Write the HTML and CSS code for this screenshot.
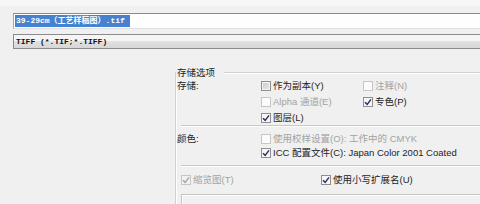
FILE: index.html
```html
<!DOCTYPE html>
<html lang="zh-CN">
<head>
<meta charset="utf-8">
<title>存储为</title>
<link rel="stylesheet" href="styles.css">
</head>
<body>
<div class="dialog">
  <div class="filename"><span class="sel">39-29cm（工艺样稿图）.tif</span></div>
  <div class="format">TIFF (*.TIF;*.TIFF)</div>

  <section class="group">
    <div class="group-title">存储选项</div>

    <div class="opts store">
      <span class="label">存储:</span>
      <label class="item"><span class="cb cb-hover"></span>作为副本(Y)</label>
      <label class="item disabled"><span class="cb"></span>注释(N)</label>
      <label class="item disabled c2"><span class="cb"></span>Alpha 通道(E)</label>
      <label class="item"><span class="cb checked"><svg viewBox="0 0 8 8" width="8" height="8"><path d="M1 4.2 L3.2 6.4 L7 1.4"/></svg></span>专色(P)</label>
      <label class="item c2"><span class="cb checked"><svg viewBox="0 0 8 8" width="8" height="8"><path d="M1 4.2 L3.2 6.4 L7 1.4"/></svg></span>图层(L)</label>
    </div>

    <div class="sep"></div>

    <div class="opts color">
      <span class="label">颜色:</span>
      <label class="item disabled span"><span class="cb"></span>使用校样设置(O): 工作中的 CMYK</label>
      <label class="item span"><span class="cb checked"><svg viewBox="0 0 8 8" width="8" height="8"><path d="M1 4.2 L3.2 6.4 L7 1.4"/></svg></span>ICC 配置文件(C): Japan Color 2001 Coated</label>
    </div>

    <div class="sep"></div>

    <div class="bottom-row">
      <label class="item disabled"><span class="cb checked"><svg viewBox="0 0 8 8" width="8" height="8"><path d="M1 4.2 L3.2 6.4 L7 1.4"/></svg></span>缩览图(T)</label>
      <label class="item"><span class="cb checked"><svg viewBox="0 0 8 8" width="8" height="8"><path d="M1 4.2 L3.2 6.4 L7 1.4"/></svg></span>使用小写扩展名(U)</label>
    </div>

    <div class="preview"></div>
  </section>
</div>
</body>
</html>
```
FILE: styles.css
```css
* { box-sizing: border-box; }

html, body { margin: 0; }

body {
  width: 480px;
  height: 204px;
  overflow: hidden;
  background: linear-gradient(#f6f6f6 0 6px, #f0f0f0 6px);
  font-family: "Liberation Sans", "Noto Sans CJK SC", sans-serif;
  font-size: 9.5px;
  color: #1e1e1e;
}

.dialog {
  padding: 13px 0 0 13px;
}

.filename {
  height: 16px;
  border: 1px solid #a3a7ad;
  border-top-color: #868c94;
  border-bottom-color: #dde1e6;
  border-right: none;
  background: #fdfefd;
  padding-left: 1px;
  display: flex;
  align-items: center;
}

.sel {
  font-family: "Liberation Mono", "Noto Sans CJK SC", monospace;
  font-size: 8px;
  font-weight: bold;
  background: #4682cf;
  color: #fff;
  height: 12px;
  line-height: 12px;
  padding: 0 5px 0 1px;
}

.format {
  margin-top: 5px;
  height: 15px;
  border: 1px solid #8b8b8b;
  border-right: none;
  background: linear-gradient(#f5f5f5 0 45%, #e2e2e2 45%, #d6d6d6);
  font-family: "Liberation Mono", monospace;
  font-size: 8px;
  font-weight: bold;
  line-height: 13px;
  padding-left: 2px;
  color: #111;
}

.group {
  margin: 23px 0 0 162px;
  border-top: 1px solid #d0d0d0;
  border-left: 1px solid #d0d0d0;
  box-shadow: inset 1px 1px 0 #fff;
}

.group-title {
  margin-top: -6px;
  height: 12px;
  line-height: 12px;
  padding: 0 9px 0 1px;
  width: fit-content;
  background: #f0f0f0;
}

.opts {
  display: grid;
  grid-template-columns: 84px 102px 1fr;
  grid-auto-rows: 14px;
  padding-left: 1px;
}

.store { row-gap: 2px; }

.color {
  padding-top: 5px;
  margin-bottom: 5px;
}

.label {
  line-height: 14px;
}

.item {
  display: flex;
  align-items: center;
  white-space: nowrap;
  line-height: 14px;
}

.c2 { grid-column: 2; }
.span { grid-column: 2 / 4; }

.item.disabled { color: #a3a3a3; }

.cb {
  flex: none;
  width: 10px;
  height: 10px;
  margin-right: 2px;
  border: 1px solid #8f8f8f;
  background: #f6f6f6;
  display: flex;
}

.cb svg path {
  fill: none;
  stroke: #30306a;
  stroke-width: 1.5;
}

.cb-hover {
  background: linear-gradient(135deg, #c9c9c9, #e9e9e9);
  box-shadow: inset 0 0 0 1px #f2f2f2;
}

.disabled .cb {
  border-color: #c6c6c6;
  background: #fbfbfb;
}

.disabled .cb svg path { stroke: #a8a8a8; }
.disabled .cb.checked { background: #f1f1f1; }

.sep {
  margin-left: 5px;
  height: 2px;
  border-top: 1px solid #c8c8c8;
  border-bottom: 1px solid #fff;
}

.bottom-row {
  display: grid;
  grid-template-columns: 140px 1fr;
  grid-auto-rows: 14px;
  padding: 6px 0 0 5px;
}

.preview {
  margin: 7px 0 0 5px;
  height: 20px;
  border-top: 1px solid #c6c6c6;
  border-left: 1px solid #c6c6c6;
  box-shadow: inset 1px 1px 0 #fff;
}
```
